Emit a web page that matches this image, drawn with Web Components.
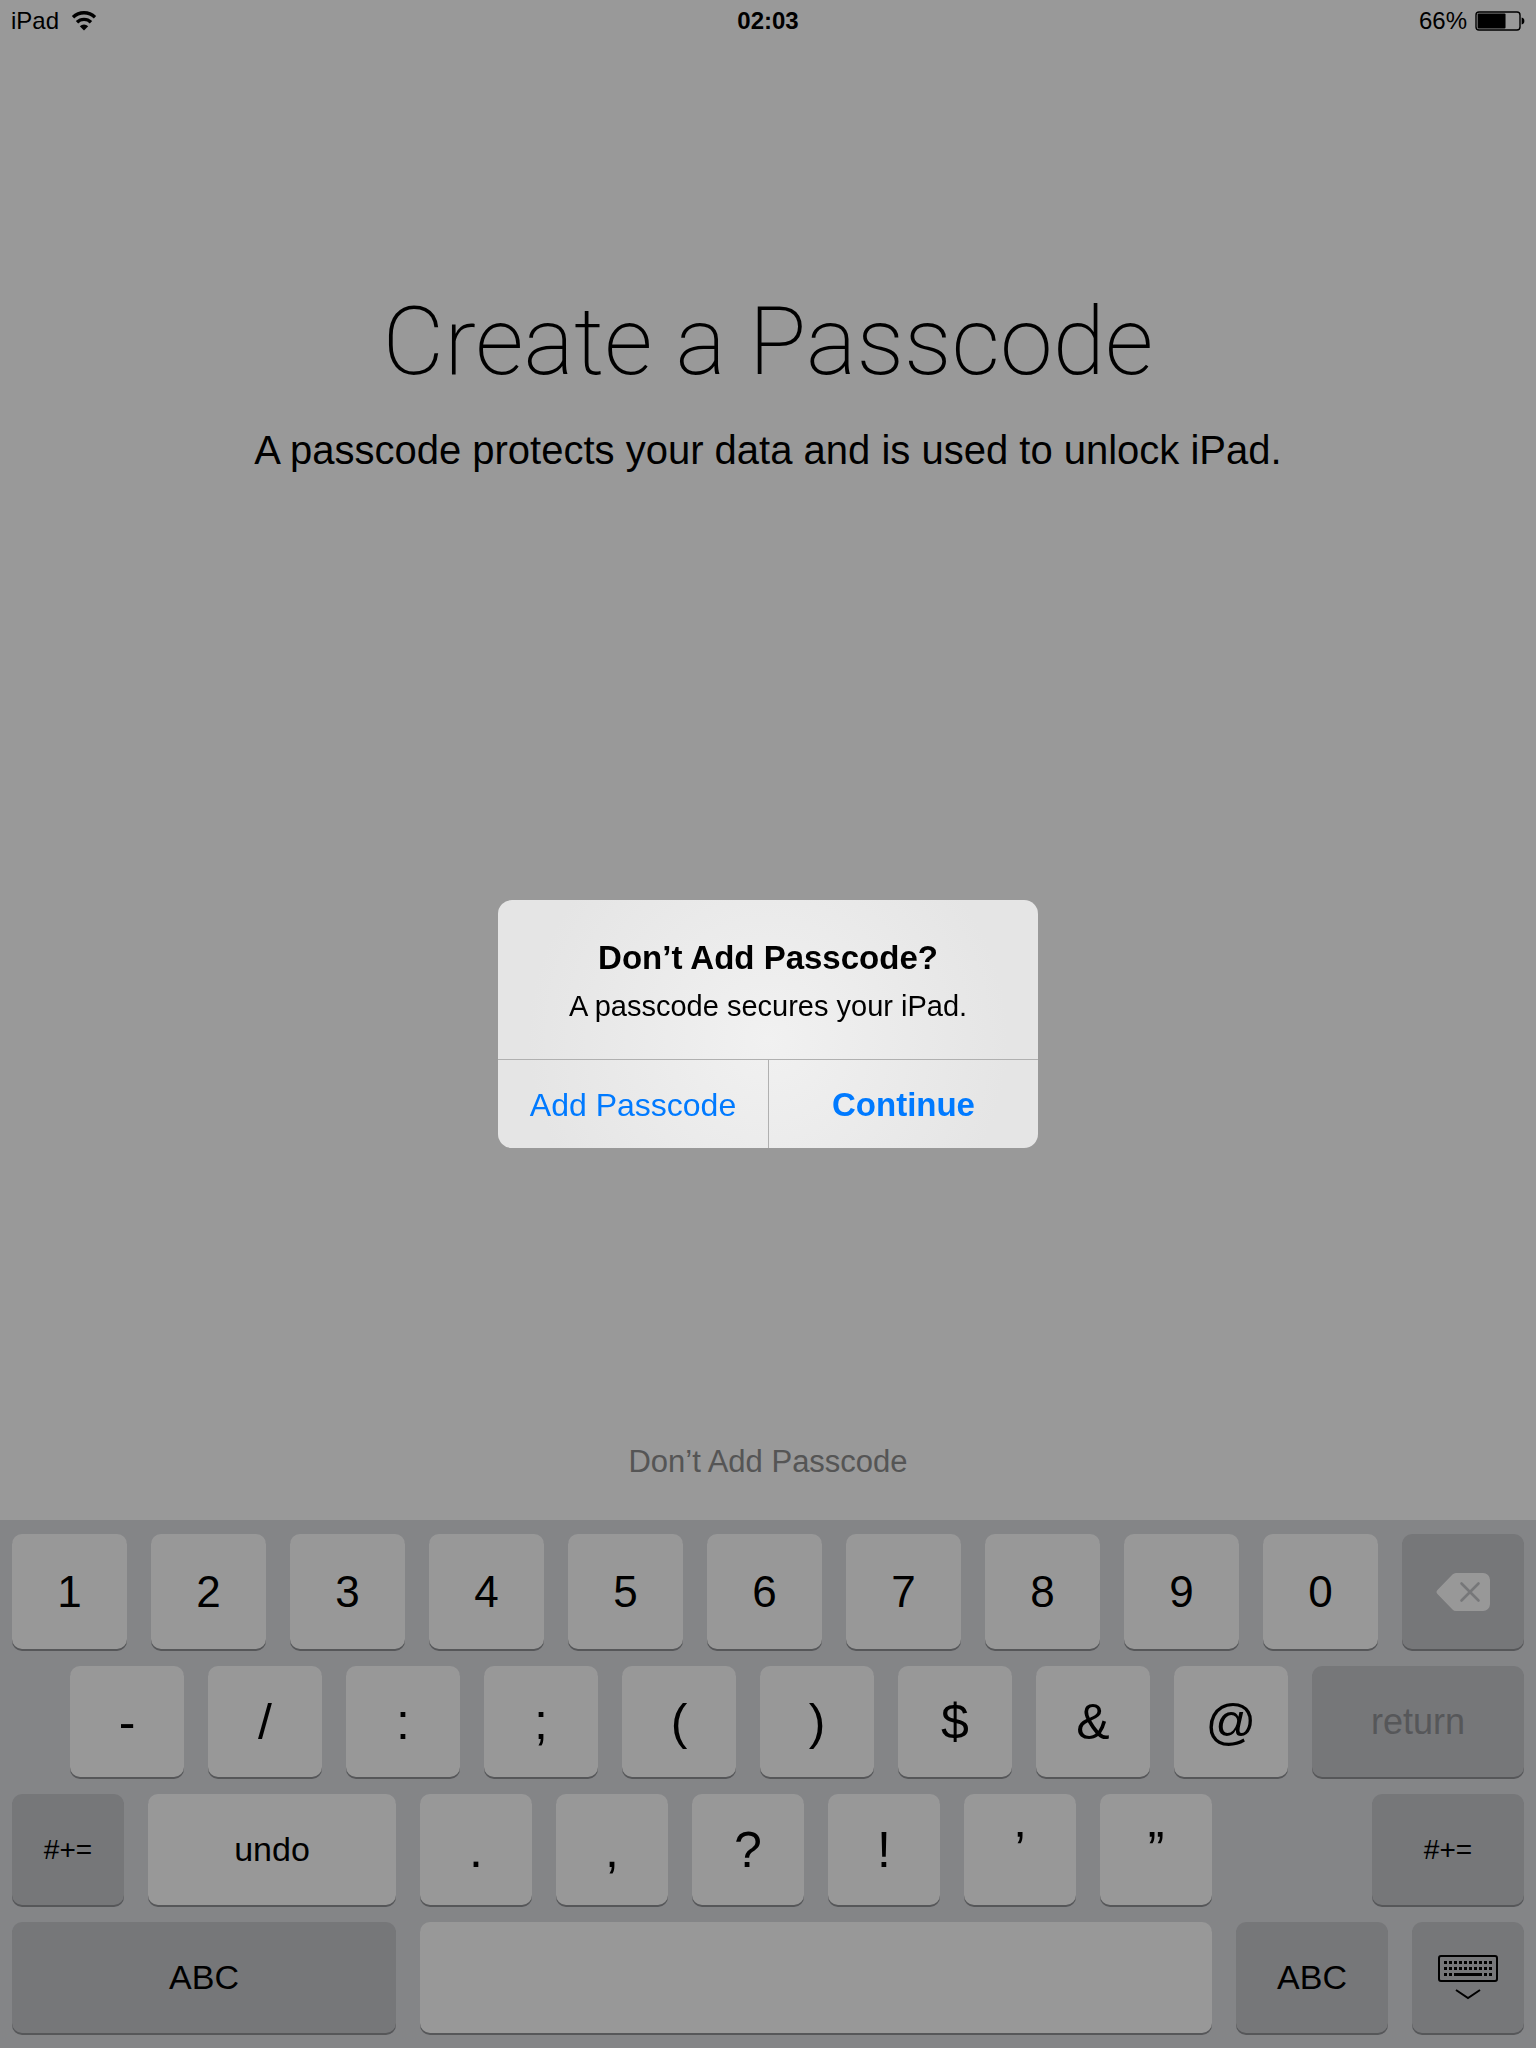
<!DOCTYPE html>
<html lang="en">
<head>
<meta charset="utf-8">
<meta name="viewport" content="width=device-width, initial-scale=1">
<title>Create a Passcode</title>
<style>
  body {
    margin: 0;
    background: #fff;
    color: #000;
    font-family: "Liberation Sans", Arial, sans-serif;
  }
</style>
</head>
<body>
<setup-screen>
  <status-bar slot="status" carrier="iPad" time="02:03" battery="66"></status-bar>
  <setup-header heading="Create a Passcode">A passcode protects your data and is used to unlock iPad.</setup-header>
  <text-link slot="footer">Don’t Add Passcode</text-link>
  <key-board slot="keyboard"></key-board>
  <alert-box slot="alert" heading="Don’t Add Passcode?" cancel="Add Passcode" confirm="Continue">A passcode secures your iPad.</alert-box>
</setup-screen>

<script>
// page layout : status bar, content, keyboard, then the dimmed layer with the alert
class SetupScreen extends HTMLElement {
  constructor() {
    super();
    this.attachShadow({ mode: "open" });
    this.shadowRoot.innerHTML = `
      <style>
        :host {
          display: flex;
          flex-direction: column;
          min-height: 100vh;
        }
        main {
          flex: 1;
          display: flex;
          flex-direction: column;
          justify-content: space-between;
          align-items: center;
        }
        .dim {
          position: fixed;
          inset: 0;
          display: grid;
          place-items: center;
          background: rgba(0, 0, 0, 0.4);
        }
      </style>
      <slot name="status"></slot>
      <main>
        <slot></slot>
        <slot name="footer"></slot>
      </main>
      <slot name="keyboard"></slot>
      <div class="dim"><slot name="alert"></slot></div>
    `;
  }
}

class StatusBar extends HTMLElement {
  constructor() {
    super();
    this.attachShadow({ mode: "open" });
  }

  connectedCallback() {
    const level = this.getAttribute("battery");
    this.shadowRoot.innerHTML = `
      <style>
        :host {
          display: grid;
          grid-template-columns: 1fr auto 1fr;
          align-items: center;
          height: 42px;
          padding: 0 11px;
          font-size: 24px;
          line-height: 42px;
        }
        div {
          display: flex;
          align-items: center;
          gap: 12px;
        }
        .right {
          justify-content: flex-end;
          gap: 8px;
        }
        b {
          font-weight: 700;
        }
      </style>
      <div>
        <span>${this.getAttribute("carrier")}</span>
        <svg width="26" height="20" viewBox="0 0 26 20" role="img" aria-label="Wi-Fi">
          <path d="M2 6.2a16 16 0 0 1 22 0" fill="none" stroke="#000" stroke-width="3.4"/>
          <path d="M6 11.2a10 10 0 0 1 14 0" fill="none" stroke="#000" stroke-width="3.4"/>
          <path d="M8.8 15.2a6.2 6.2 0 0 1 8.4 0L13 19.4z"/>
        </svg>
      </div>
      <b>${this.getAttribute("time")}</b>
      <div class="right">
        <span>${level}%</span>
        <svg width="50" height="20" viewBox="0 0 50 20" role="img" aria-label="Battery">
          <rect x="1" y="1" width="44" height="18" rx="3" fill="none" stroke="#000" stroke-width="1.4"/>
          <rect x="2.6" y="2.6" width="${(40.8 * level) / 100 + 1}" height="14.8" rx="1"/>
          <path d="M46.6 6.5c2 .3 2.8 1.6 2.8 3.5s-.8 3.2-2.8 3.5z"/>
        </svg>
      </div>
    `;
  }
}

class SetupHeader extends HTMLElement {
  constructor() {
    super();
    this.attachShadow({ mode: "open" });
  }

  connectedCallback() {
    this.shadowRoot.innerHTML = `
      <style>
        :host {
          display: block;
          padding-top: 240px;
          text-align: center;
        }
        h1 {
          margin: 0 0 24px;
          font: 200 95px/120px Roboto, "Liberation Sans", sans-serif;
        }
        p {
          margin: 0;
          font-size: 40px;
          line-height: 48px;
        }
      </style>
      <h1>${this.getAttribute("heading")}</h1>
      <p><slot></slot></p>
    `;
  }
}

class TextLink extends HTMLElement {
  constructor() {
    super();
    this.attachShadow({ mode: "open" });
    this.shadowRoot.innerHTML = `
      <style>
        :host {
          display: block;
          padding-bottom: 38px;
        }
        button {
          border: 0;
          padding: 0;
          background: none;
          color: #8e8e8e;
          font: inherit;
          font-size: 31px;
          line-height: 40px;
        }
      </style>
      <button type="button"><slot></slot></button>
    `;
  }
}

class AlertBox extends HTMLElement {
  constructor() {
    super();
    this.attachShadow({ mode: "open" });
  }

  connectedCallback() {
    this.shadowRoot.innerHTML = `
      <style>
        :host {
          display: block;
          width: 540px;
          max-width: 90vw;
          overflow: hidden;
          border-radius: 14px;
          background: radial-gradient(circle at 50% 56%, #f1f1f1, #e5e5e5 240px);
        }
        .text {
          padding: 36px 24px 35px;
          text-align: center;
        }
        h2 {
          margin: 0 0 8px;
          font-size: 33px;
          line-height: 44px;
        }
        p {
          margin: 0;
          font-size: 29px;
          line-height: 36px;
        }
        .actions {
          display: grid;
          grid-template-columns: 1fr 1fr;
          border-top: 1px solid #b0b0b0;
        }
        button {
          border: 0;
          padding: 2px 0 0;
          background: none;
          color: #007aff;
          font: inherit;
          font-size: 32px;
          line-height: 86px;
        }
        .confirm {
          border-left: 1px solid #b0b0b0;
          font-size: 33px;
          font-weight: 700;
        }
      </style>
      <div role="alertdialog" aria-labelledby="title" aria-describedby="message">
        <div class="text">
          <h2 id="title">${this.getAttribute("heading")}</h2>
          <p id="message"><slot></slot></p>
        </div>
        <div class="actions">
          <button type="button">${this.getAttribute("cancel")}</button>
          <button type="button" class="confirm">${this.getAttribute("confirm")}</button>
        </div>
      </div>
    `;
  }
}

// one key, its share of the row is given by the "span" attribute
class KeyCap extends HTMLElement {
  constructor() {
    super();
    this.attachShadow({ mode: "open" });
  }

  connectedCallback() {
    const label = this.getAttribute("label");
    this.shadowRoot.innerHTML = `
      <style>
        :host {
          display: flex;
          flex: ${this.getAttribute("span")} 1 0;
          min-width: 0;
        }
        button {
          flex: 1;
          min-width: 0;
          display: flex;
          align-items: center;
          justify-content: center;
          border: 0;
          padding: 0;
          border-radius: 10px;
          background: #fefefe;
          box-shadow: 0 2px 0 #8f9195;
          color: #000;
          font: inherit;
          font-size: 44px;
        }
        :host([dark]) button {
          background: #c5c6ca;
        }
        :host([size="symbol"]) button {
          font-size: 50px;
        }
        :host([size="word"]) button {
          font-size: 34px;
        }
        :host([size="small"]) button {
          font-size: 28px;
        }
        :host([disabled]) button {
          color: #8f9195;
          font-size: 36px;
        }
      </style>
      <button type="button" ${label ? `aria-label="${label}"` : ""} ${this.hasAttribute("disabled") ? "disabled" : ""}><slot></slot></button>
    `;
  }
}

class KeyBoard extends HTMLElement {
  constructor() {
    super();
    this.attachShadow({ mode: "open" });
    const keys = (chars, span, size) =>
      [...chars]
        .map((c) => `<key-cap span="${span}" size="${size}">${c === "&" ? "&amp;" : c}</key-cap>`)
        .join("");
    // small dots of the "hide keyboard" icon
    const dots = [6, 12, 18]
      .map((y) =>
        [6, 11, 16, 21, 26, 31, 36, 41, 46, 51]
          .filter((x) => y < 18 || x < 16 || x > 41)
          .map((x) => `<rect x="${x}" y="${y}" width="3" height="3"/>`)
          .join("")
      )
      .join("");

    this.shadowRoot.innerHTML = `
      <style>
        :host {
          display: grid;
          grid-template-rows: 115px 111px 111px 111px;
          gap: 17px;
          padding: 14px 12px 15px;
          background: #dddee2;
        }
        .row {
          display: flex;
          gap: 24px;
        }
        .indent {
          padding-left: 58px;
        }
        .space {
          flex: 112 1 0;
        }
      </style>
      <div class="row">
        ${keys("1234567890", 115, "digit")}
        <key-cap span="122" dark label="Delete">
          <svg width="54" height="38" viewBox="0 0 54 38">
            <path d="M20 0h27a7 7 0 0 1 7 7v24a7 7 0 0 1-7 7H20q-2 0-3.5-1.5L1.5 21q-2-2 0-4L16.5 1.5Q18 0 20 0z" fill="#fefefe"/>
            <path d="M25.5 10.5l17 17M42.5 10.5l-17 17" stroke="#c5c6ca" stroke-width="2.6" stroke-linecap="round"/>
          </svg>
        </key-cap>
      </div>
      <div class="row indent">
        ${keys("-/:;()$&@", 114, "symbol")}
        <key-cap span="212" dark disabled>return</key-cap>
      </div>
      <div class="row">
        <key-cap span="112" dark size="small">#+=</key-cap>
        <key-cap span="248" size="word">undo</key-cap>
        ${keys(".,?!’”", 112, "symbol")}
        <span class="space"></span>
        <key-cap span="152" dark size="small">#+=</key-cap>
      </div>
      <div class="row">
        <key-cap span="384" dark size="word">ABC</key-cap>
        <key-cap span="792" label="Space"></key-cap>
        <key-cap span="152" dark size="word">ABC</key-cap>
        <key-cap span="112" dark label="Hide keyboard">
          <svg width="60" height="45" viewBox="0 0 60 45">
            <rect x="1" y="1" width="58" height="25" rx="2" fill="none" stroke="#000" stroke-width="2"/>
            ${dots}
            <rect x="16" y="18" width="28" height="3"/>
            <path d="M18 35l12 8 12-8" fill="none" stroke="#000" stroke-width="2"/>
          </svg>
        </key-cap>
      </div>
    `;
  }
}

window.customElements.define("setup-screen", SetupScreen);
window.customElements.define("status-bar", StatusBar);
window.customElements.define("setup-header", SetupHeader);
window.customElements.define("text-link", TextLink);
window.customElements.define("alert-box", AlertBox);
window.customElements.define("key-cap", KeyCap);
window.customElements.define("key-board", KeyBoard);
</script>
</body>
</html>
